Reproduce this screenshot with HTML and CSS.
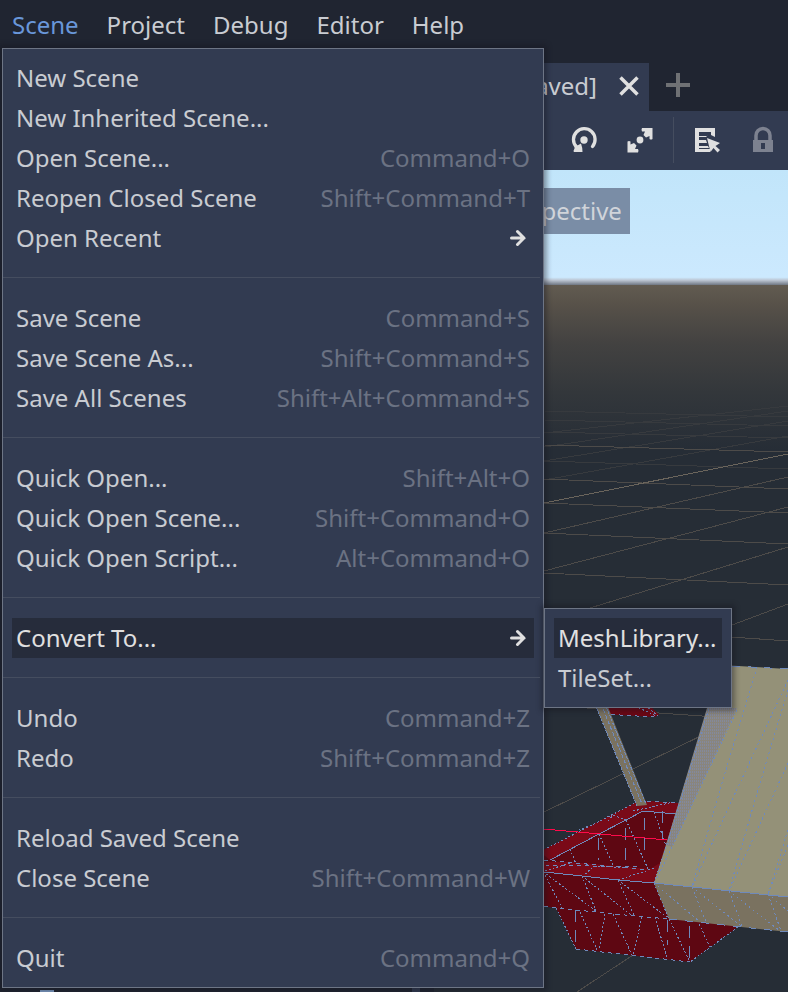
FILE: index.html
```
<!DOCTYPE html>
<html lang="en">
  <head>
    <meta charset="UTF-8" />
    <meta name="viewport" content="width=device-width, initial-scale=1.0" />
    <title>Scene Editor</title>
    <link rel="stylesheet" href="styles.css">
  </head>
  <body>
    <header>
      <nav class="menubar">
        <button class="active">Scene</button>
        <button>Project</button>
        <button>Debug</button>
        <button>Editor</button>
        <button>Help</button>
      </nav>

      <ul class="menu">
        <li><button>New Scene</button></li>
        <li><button>New Inherited Scene...</button></li>
        <li><button>Open Scene... <kbd>Command+O</kbd></button></li>
        <li><button>Reopen Closed Scene <kbd>Shift+Command+T</kbd></button></li>
        <li>
          <button>
            Open Recent
            <svg class="arrow" viewBox="0 0 16 18"><path d="M1.5 9H14M7.5 2.500l6.500 6.500-6.500 6.500" /></svg>
          </button>
        </li>
        <li class="separator"></li>
        <li><button>Save Scene <kbd>Command+S</kbd></button></li>
        <li><button>Save Scene As... <kbd>Shift+Command+S</kbd></button></li>
        <li><button>Save All Scenes <kbd>Shift+Alt+Command+S</kbd></button></li>
        <li class="separator"></li>
        <li><button>Quick Open... <kbd>Shift+Alt+O</kbd></button></li>
        <li><button>Quick Open Scene... <kbd>Shift+Command+O</kbd></button></li>
        <li><button>Quick Open Script... <kbd>Alt+Command+O</kbd></button></li>
        <li class="separator"></li>
        <li>
          <button class="hovered">
            Convert To...
            <svg class="arrow" viewBox="0 0 16 18"><path d="M1.5 9H14M7.5 2.500l6.500 6.500-6.500 6.500" /></svg>
          </button>
          <ul class="menu submenu">
            <li><button class="hovered">MeshLibrary...</button></li>
            <li><button>TileSet...</button></li>
          </ul>
        </li>
        <li class="separator"></li>
        <li><button>Undo <kbd>Command+Z</kbd></button></li>
        <li><button>Redo <kbd>Shift+Command+Z</kbd></button></li>
        <li class="separator"></li>
        <li><button>Reload Saved Scene</button></li>
        <li><button>Close Scene <kbd>Shift+Command+W</kbd></button></li>
        <li class="separator"></li>
        <li><button>Quit <kbd>Command+Q</kbd></button></li>
      </ul>
    </header>

    <div class="workspace">
      <aside class="dock">
        <span class="node-icon"></span>
        <span class="scrollbar"></span>
      </aside>

      <main>
        <div class="tabs">
          <div class="tab">
            <span>[unsaved]</span>
            <button aria-label="Close tab">
              <svg width="20" height="20" viewBox="0 0 20 20"><path class="line" stroke-width="3.5" d="M1.5 1.5l17 17M18.5 1.5l-17 17" /></svg>
            </button>
          </div>
          <button class="add" aria-label="New tab">
            <svg width="26" height="26" viewBox="0 0 26 26"><path d="M13 1v24M1 13h24" /></svg>
          </button>
        </div>

        <div class="toolbar">
          <button aria-label="Rotate">
            <svg width="28" height="28" viewBox="0 0 28 28">
              <path class="line" stroke-width="3.3" stroke-linecap="round" d="M6.5 21A10.8 10.8 0 1 1 22.5 20.5" />
              <path d="M5 18l2.500 1.500 3.500-2q1.500 4 1.500 8.500H4q-1-1 .5-3.500z" />
              <circle cx="14" cy="14" r="3.7" />
            </svg>
          </button>
          <button aria-label="Scale">
            <svg width="28" height="28" viewBox="0 0 28 28">
              <path d="M16 2h10.500v11q-1.500 1-3 0V10l-3.500 1.500-2.500-2.500 1.500-3.500h-3q-1-1.750 0-3.500z" />
              <path d="M12 26.500H1.500V15.500q1.500-1 3 0v3l3.500-1.500 2.500 2.500-1.500 3.500h3q1 1.750 0 3.500z" />
              <circle cx="14" cy="14" r="3.4" />
            </svg>
          </button>
          <span class="divider"></span>
          <button aria-label="List select">
            <svg width="28" height="28" viewBox="0 0 28 28">
              <path d="M2 2h20v9l-4-2V6H6v3h9l-2 2H6v3h7l1 3H6v3h9l1 2H6v1h11v3H2z" />
              <path d="M6 6h12v3l-4 1H6z" fill="#323b51" />
              <path d="M14 12l13 5-4.500 3 4.500 4-2.500 2.500-4-4.500-3 4z" />
            </svg>
          </button>
          <button class="disabled" aria-label="Lock">
            <svg width="28" height="28" viewBox="0 0 28 28">
              <path class="line" stroke-width="3.5" d="M7 14V9.500a7 7 0 0 1 14 0V14" />
              <path fill-rule="evenodd" d="M4 14h20v12H4zM12 17h4v6h-4z" />
            </svg>
          </button>
        </div>

        <div class="viewport">
          <svg class="scene" viewBox="434 170 354 822" preserveAspectRatio="xMinYMin slice">
            <defs>
              <linearGradient id="sky" x2="0" y2="1">
                <stop offset="0" stop-color="#c1e5fa" />
                <stop offset="0.925" stop-color="#cce9fe" />
                <stop offset="0.95" stop-color="#bcc5d2" />
                <stop offset="1" stop-color="#5f6672" />
              </linearGradient>
              <linearGradient id="ground" x2="0" y2="1">
                <stop offset="0" stop-color="#625b51" />
                <stop offset="0.12" stop-color="#575149" />
                <stop offset="0.35" stop-color="#434241" />
                <stop offset="0.65" stop-color="#33373b" />
                <stop offset="1" stop-color="#262d36" />
              </linearGradient>
              <pattern id="hatch" width="2" height="3" patternUnits="userSpaceOnUse">
                <rect width="2" height="3" fill="#89857d" />
                <rect width="1" height="2" fill="#83899c" />
              </pattern>
            </defs>
            <rect x="434" y="170" width="354" height="116" fill="url(#sky)" />
            <rect x="434" y="285" width="354" height="707" fill="#262d36" />
            <rect x="434" y="285" width="354" height="165" fill="url(#ground)" />

            <!-- floor grid -->
            <g class="grid far">
              <path d="M544 411L788 417M544 420L788 426M544 432L788 438M544 433L788 406M544 447L788 411M544 461L788 421M544 480L788 436M544 461L788 469" />
            </g>
            <g class="grid">
              <path d="M544 445L788 452M544 479L788 489M544 503L788 513M544 533L788 544M544 573L788 585M544 624L788 641M544 705L788 722" />
              <path d="M544 533L788 477M544 571L788 507M590 608L788 547M732 625L788 604M544 812L709 732M577 992L730 891" />
              <path class="bright" d="M544 503L788 454" />
            </g>

            <!-- red body -->
            <path fill="#5e0712" d="M540 852L547 848 635 803 647 801 678 803 700 900 738 927 690 962 576 949 556 908 540 906z" />
            <path fill="#7a0a18" d="M540 852L547 848 635 803 647 801 678 803 676 814 643 811 626 820 599 834 550 860zM540 862L570 862 650 869 660 863 654 883 540 872z" />
            <path fill="#6c0714" d="M602 704h46l11 11-5 2-51-3z" />
            <path fill="#7a0a18" d="M640 704h8l11 11-5 1z" />
            <g class="wire">
              <path d="M550 860L599 834 626 820 643 811 676 814M544 872L582 876 618 880 654 883" />
              <path stroke-dasharray="4 4" d="M544 906L576 910 635 916 669 919M576 949L690 962M544 860L650 870M647 801L678 803M545 865L640 867M603 714L654 717" />
              <path stroke-dasharray="2 2" d="M547 848L635 803M556 908L576 949M738 927L690 962M570 849L576 864M599 834L613 865M626 820L648 869M582 876L596 911M545 875L562 908M546 874L596 911M582 876L631 915M618 880L634 915M618 880L668 918M580 912L598 952M613 914L632 955M655 917L667 958M669 919L690 962M699 924L710 947M605 914L599 950M642 917L633 955" />
              <path stroke-dasharray="2 2" d="M575 832L588 826M608 821L613 815 626 820M633 811L674 802M654 812L668 851M582 877L594 866 630 868M545 871L570 863M618 880L655 868M635 706L656 716M645 705L658 716" />
              <path stroke-dasharray="12 8" d="M575 910V948M689 926V961M667 920V945M644 818V857M662 811V840M625 828V862M598 838V860" />
            </g>
            <path class="axis" d="M544 829L667 840" />

            <!-- leg -->
            <path fill="#7a7260" d="M594 702h12l41 103-10 1z" />
            <g class="wire">
              <path stroke-dasharray="3 1" d="M595 704L637 806M605 704L646 804" />
              <path stroke-dasharray="4 2" d="M601 704L642 804" />
            </g>

            <!-- slab -->
            <path fill="#949178" d="M721 665L788 669V897L654 883 669 835z" />
            <path fill="#7a7260" d="M654 883L788 897V932L669 919z" />
            <path fill="url(#hatch)" d="M707 708H737L672 847 666 845z" />
            <g class="wire">
              <path d="M654 883L788 897" />
              <path stroke-dasharray="8 8" d="M732 666L788 669M669 919L788 932" />
              <path stroke-dasharray="2 2" d="M654 883L669 838 709 708M737 710L672 847 656 880M654 883L669 919" />
              <path stroke-dasharray="2 3" d="M757 667L717 800 692 887M788 680L732 800 692 887M788 690L755 800 729 891M788 763L771 800 729 891M788 830L768 894M788 845L768 894M692 887L706 922M729 891L742 926M768 894L781 931M654 883L700 922M692 887L741 926M729 891L780 931M768 894L788 911" />
            </g>
          </svg>
          <button class="view-label">Perspective</button>
        </div>
      </main>
    </div>
  </body>
</html>
```
FILE: styles.css
```
* {
  box-sizing: border-box;
}

body {
  margin: 0;
  display: flex;
  flex-direction: column;
  min-height: 100vh;
  overflow: hidden;
  font-family: "Noto Sans", sans-serif;
  font-size: 24px;
  line-height: 40px;
  background-color: #202531;
  color: #c9ccd2;
}

button {
  padding: 0;
  border: none;
  background: none;
  color: inherit;
  font: inherit;
  cursor: pointer;
}

svg {
  display: block;
  fill: currentColor;
}

.line {
  fill: none;
  stroke: currentColor;
}

header {
  position: relative;
  z-index: 1;
}

.menubar {
  display: flex;
  gap: 28px;
  padding: 5px 12px 3px;
}

.menubar .active {
  color: #6997da;
}

/* Drop-down menus */
.menu {
  position: absolute;
  top: 100%;
  left: 2px;
  width: 542px;
  margin: 0;
  padding: 9px;
  list-style: none;
  background-color: #323b51;
  border: 1px solid #6d7585;
  box-shadow: 0 0 5px 3px rgba(20, 20, 30, 0.4);
}

.menu li {
  position: relative;
}

.menu button {
  display: flex;
  align-items: center;
  justify-content: space-between;
  width: 100%;
  height: 40px;
  padding: 0 4px;
  white-space: nowrap;
}

.menu .hovered {
  background-color: #262c3b;
  color: #e0e0e0;
}

.menu kbd {
  font: inherit;
  color: #6b7283;
}

.menu .separator {
  height: 40px;
  margin: 0 -6px 0 -9px;
  background: linear-gradient(#454d5f, #454d5f) 0 19px / 100% 1px no-repeat;
}

.menu .submenu {
  top: -10px;
  left: calc(100% + 10px);
  width: 188px;
}

.arrow {
  width: 16px;
  height: 18px;
  margin-right: 4px;
  fill: none;
  stroke: #e0e0e0;
  stroke-width: 3;
  stroke-linecap: round;
}

/* Editor area */
.workspace {
  display: flex;
  flex: 1;
  padding-top: 15px;
}

.dock {
  display: flex;
  flex-shrink: 0;
  align-items: flex-end;
  justify-content: space-between;
  width: 434px;
  padding: 0 14px 0 40px;
}

.node-icon {
  width: 14px;
  height: 2px;
  background-color: #7d9cc4;
}

.scrollbar {
  width: 8px;
  height: 4px;
  background-color: #323b51;
}

main {
  display: flex;
  flex: 1;
  flex-direction: column;
  min-width: 0;
}

.tabs {
  display: flex;
  gap: 16px;
}

.tab {
  display: flex;
  align-items: center;
  justify-content: flex-end;
  gap: 22px;
  width: 215px;
  height: 48px;
  padding: 0 10px 2px 0;
  background-color: #323b51;
}

.tab button,
.toolbar button {
  color: #e0e0e0;
}

.add {
  padding-bottom: 4px;
}

.add svg {
  fill: none;
  stroke: #6f7174;
  stroke-width: 4;
}

.toolbar {
  display: flex;
  align-items: center;
  justify-content: flex-end;
  gap: 28px;
  height: 59px;
  padding: 0 11px 2px 0;
  background-color: #323b51;
}

.toolbar .divider {
  width: 1px;
  height: 46px;
  margin: 0 -9px;
  background-color: #454d5f;
}

.toolbar .disabled {
  color: #7d8290;
}

.viewport {
  position: relative;
  flex: 1;
  padding: 18px 50px;
  background-color: #262d36;
}

.scene {
  position: absolute;
  inset: 0;
  width: 100%;
  height: 100%;
}

.view-label {
  position: relative;
  height: 46px;
  padding: 0 8px;
  background-color: #7a8da6;
  color: #d0d4da;
}

.grid path {
  fill: none;
  stroke: #4d4b49;
  stroke-width: 1;
  shape-rendering: crispEdges;
}

.grid.far path {
  stroke: #373a3e;
}

.grid .bright {
  stroke: #6b655c;
}

.wire path {
  fill: none;
  stroke: #6f8abc;
  stroke-width: 1;
  shape-rendering: crispEdges;
}

.axis {
  stroke: #ff0a4a;
  stroke-width: 1;
  shape-rendering: crispEdges;
}
```
